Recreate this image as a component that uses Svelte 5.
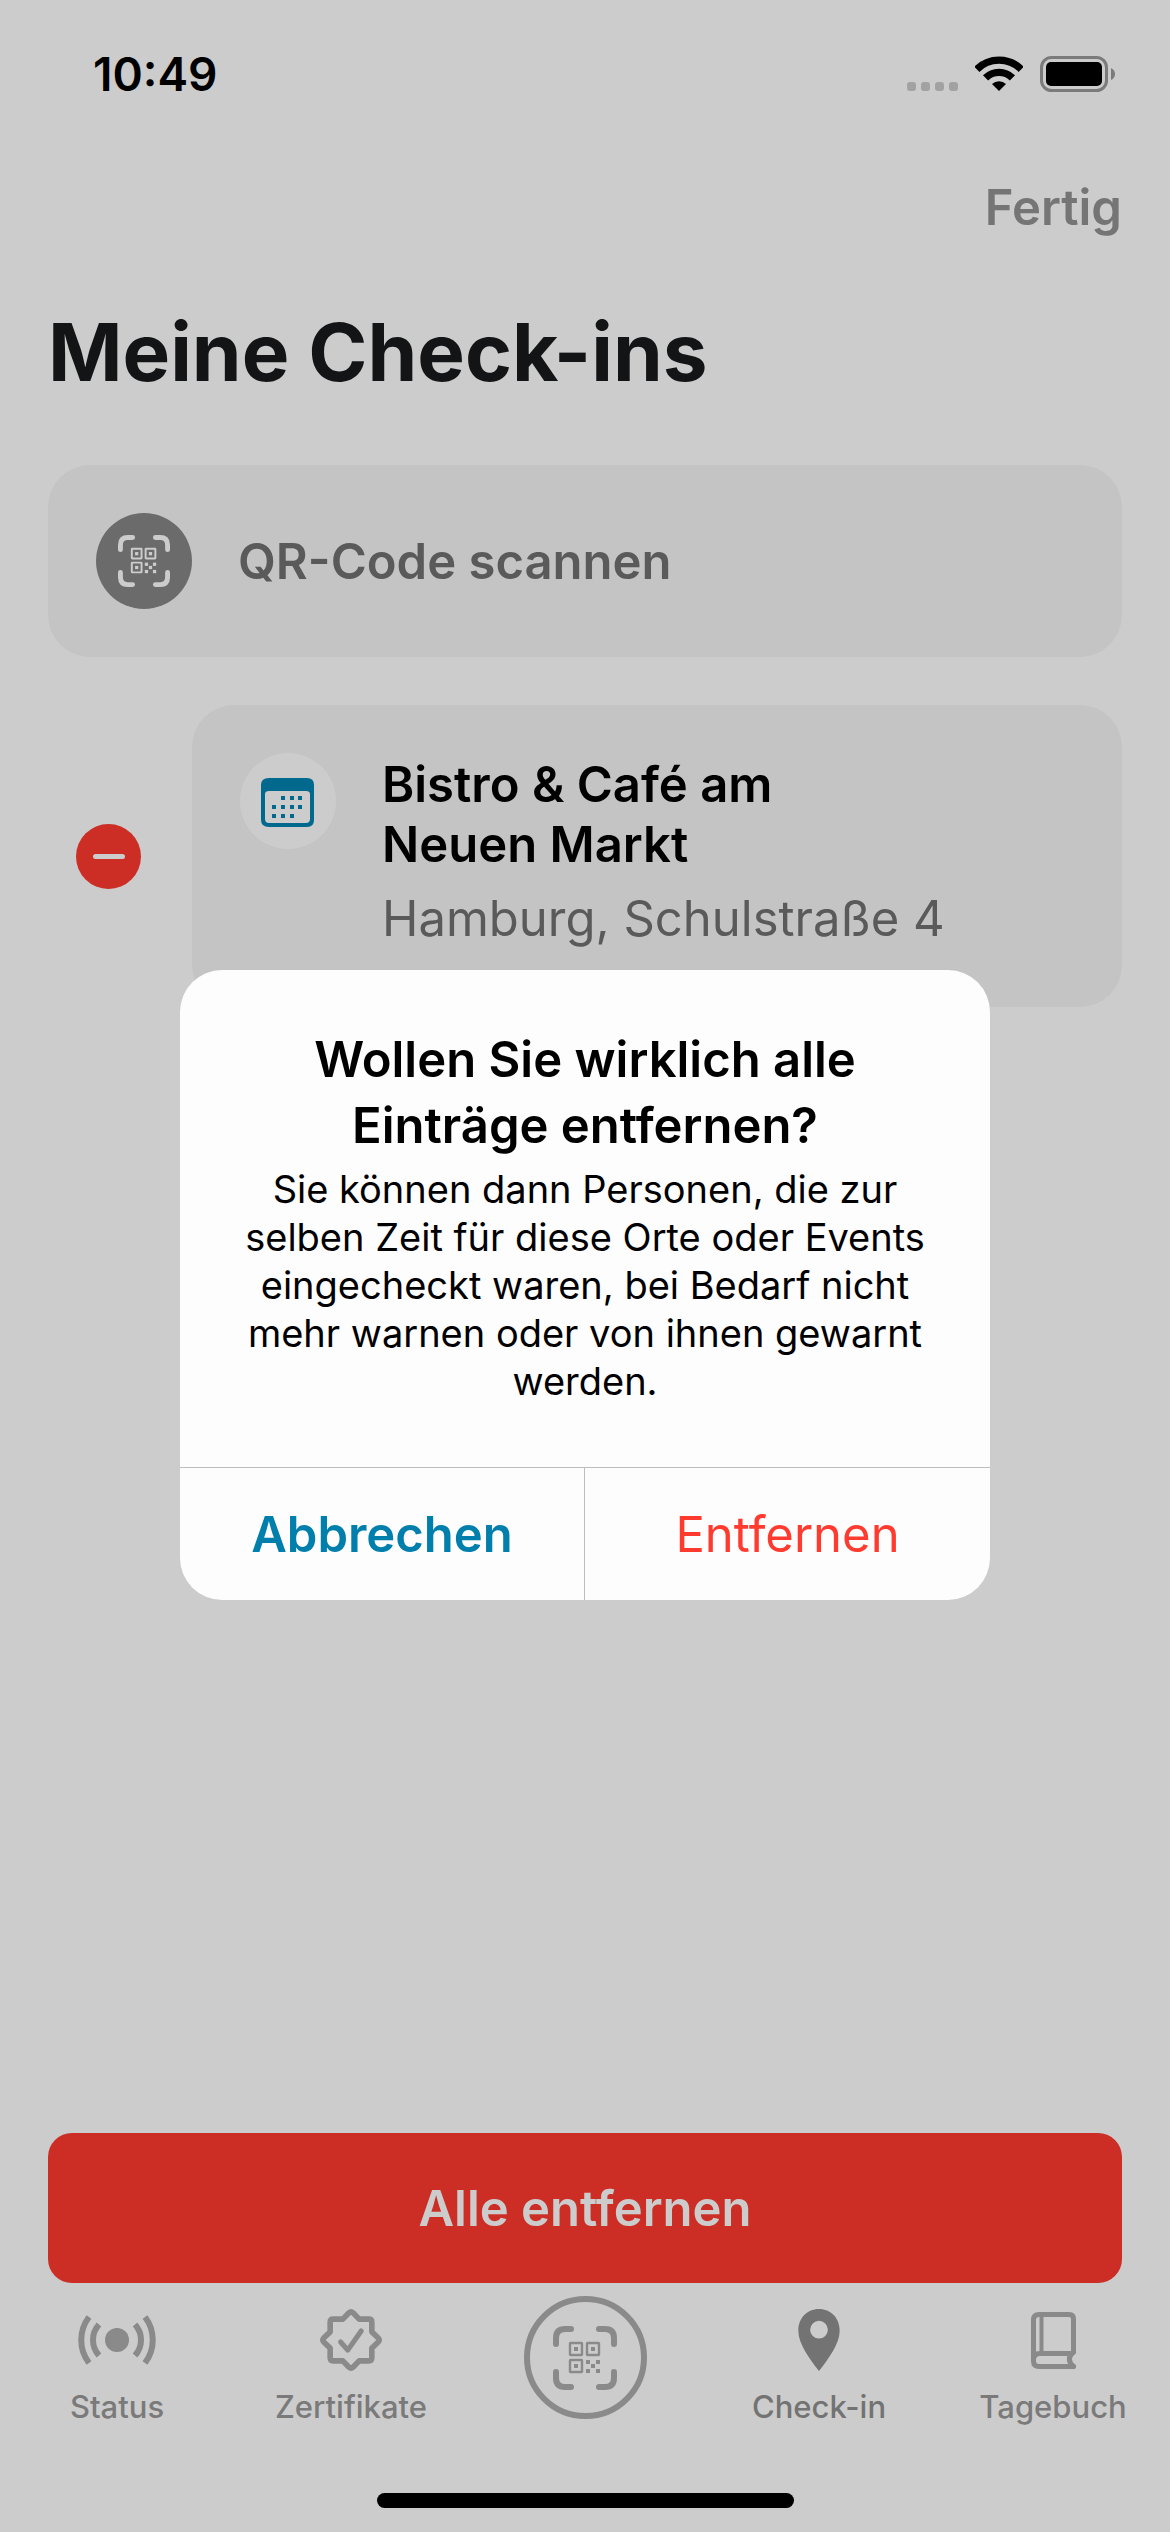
<script>
  const dayDots = [
    [20, 22], [29, 22], [37, 22],
    [11, 31], [20, 31], [29, 31], [37, 31],
    [11, 40], [20, 40], [29, 40]
  ];
  const qrFrames = [[17, 17], [34, 17], [17, 34]];
  const qrBits = [[33, 34], [43, 34], [38, 38], [33, 43], [43, 43]];
</script>

{#snippet qrIcon()}
  <svg class="qr" viewBox="0 0 64 64" aria-hidden="true">
    <g fill="none" stroke="currentColor" stroke-width="6" stroke-linecap="round">
      <path d="M18 3H12Q3 3 3 12V18" />
      <path d="M46 3H52Q61 3 61 12V18" />
      <path d="M18 61H12Q3 61 3 52V46" />
      <path d="M46 61H52Q61 61 61 52V46" />
    </g>
    {#each qrFrames as [x, y]}
      <rect {x} {y} width="12" height="12" rx="0.6" fill="none" stroke="currentColor" stroke-width="2.4" />
      <rect x={x + 4} y={y + 4} width="4" height="4" fill="currentColor" />
    {/each}
    {#each qrBits as [x, y]}
      <rect {x} {y} width="4" height="4" fill="currentColor" />
    {/each}
  </svg>
{/snippet}

<div class="screen">
  <header class="statusbar">
    <time>10:49</time>
    <div class="indicators">
      <svg width="51" height="36" viewBox="0 0 51 36" fill="#a2a2a2" aria-hidden="true">
        <rect x="0" y="26" width="9" height="9" rx="3" />
        <rect x="14" y="26" width="9" height="9" rx="3" />
        <rect x="28" y="26" width="9" height="9" rx="3" />
        <rect x="42" y="26" width="9" height="9" rx="3" />
      </svg>
      <svg width="48" height="36" viewBox="0 3 144 108" aria-hidden="true">
        <g fill="none" stroke="#000" stroke-width="22">
          <path d="M5.500 43A94 94 0 0 1 138.500 43" />
          <path d="M31.700 68.700A57 57 0 0 1 112.300 68.700" />
        </g>
        <path d="M51 87A30 30 0 0 1 93 87L72 108Z" />
      </svg>
      <svg width="75" height="36" viewBox="0 0 75 36" aria-hidden="true">
        <rect x="1.500" y="1.500" width="65" height="33" rx="10" fill="none" stroke="#7b7b7b" stroke-width="3" />
        <rect x="6" y="6" width="56" height="24" rx="5" />
        <path d="M71 12Q75 14 75 18T71 24Z" fill="#7b7b7b" />
      </svg>
    </div>
  </header>

  <div class="toolbar">
    <button class="done">Fertig</button>
  </div>

  <main>
    <h1>Meine Check-ins</h1>

    <button class="card scan">
      <span class="badge dark">{@render qrIcon()}</span>
      <span class="label">QR-Code scannen</span>
    </button>

    <div class="entry">
      <button class="remove" aria-label="Eintrag entfernen"><span></span></button>
      <article class="card place">
        <span class="badge light">
          <svg width="54" height="54" viewBox="0 0 54 54" aria-hidden="true">
            <path
              fill="#00698d"
              fill-rule="evenodd"
              d="M8 4H46Q53 4 53 11V46Q53 53 46 53H8Q0 53 0 46V11Q0 4 8 4ZM8 17Q4 17 4 20V45Q4 49 8 49H45Q49 49 49 45V20Q49 17 45 17Z"
            />
            {#each dayDots as [x, y]}
              <rect {x} {y} width="4" height="4" fill="#00698d" />
            {/each}
          </svg>
        </span>
        <div>
          <h2>Bistro & Café am<br />Neuen Markt</h2>
          <p>Hamburg, Schulstraße 4</p>
        </div>
      </article>
    </div>
  </main>

  <footer>
    <button class="remove-all">Alle entfernen</button>
    <nav>
      <a href="#status">
        <svg width="78" height="62" viewBox="0 -6 78 62" fill="none" stroke="currentColor" stroke-width="6" aria-hidden="true">
          <path d="M11 2A38 38 0 0 0 11 48M67 2A38 38 0 0 1 67 48" />
          <path d="M21 9.500A23 23 0 0 0 21 40.500M57 9.500A23 23 0 0 1 57 40.500" />
          <circle cx="39" cy="25" r="12" fill="currentColor" stroke="none" />
        </svg>
        <span>Status</span>
      </a>
      <a href="#zertifikate">
        <svg width="62" height="62" viewBox="0 0 61 61" fill="none" stroke="currentColor" stroke-width="5.500" stroke-linejoin="round" stroke-linecap="round" aria-hidden="true">
          <path d="M28.500 3.700Q30.500 2 32.500 3.700L38.500 10H48Q51 10 51 13V22.500L57.300 28.500Q59 30.500 57.300 32.500L51 38.500V48Q51 51 48 51H38.500L32.500 57.300Q30.500 59 28.500 57.300L22.500 51H13Q10 51 10 48V38.500L3.700 32.500Q2 30.500 3.700 28.500L10 22.500V13Q10 10 13 10H22.500Z" />
          <path stroke-width="5" d="M20.300 32.500L27.300 40.500L40.500 21.700" />
        </svg>
        <span>Zertifikate</span>
      </a>
      <a class="scanner" href="#scanner" aria-label="QR-Code scannen">{@render qrIcon()}</a>
      <a class="active" href="#check-in" aria-current="page">
        <svg width="42" height="62" viewBox="0 0 42 63" aria-hidden="true">
          <path
            fill="currentColor"
            fill-rule="evenodd"
            d="M21 0C33 0 42 9 42 22C42 35 31 50 21 63C11 50 0 35 0 22C0 9 9 0 21 0ZM21 12A9 9 0 1 0 21 30A9 9 0 1 0 21 12Z"
          />
        </svg>
        <span>Check-in</span>
      </a>
      <a href="#tagebuch">
        <svg width="45" height="62" viewBox="0 -3 45 62" fill="none" stroke="currentColor" stroke-width="5" stroke-linecap="round" aria-hidden="true">
          <path d="M42.500 40V7Q42.500 2.500 38 2.500H8Q2.500 2.500 2.500 8V49Q2.500 54.500 8 54.500H42.500" />
          <path d="M42.500 40C37 44 37 50 42.500 54.500" />
          <path d="M2.500 48Q2.500 41.500 9 41.500H41" />
          <path stroke-width="4" stroke-linecap="butt" d="M10.500 3V41" />
        </svg>
        <span>Tagebuch</span>
      </a>
    </nav>
    <div class="home"></div>
  </footer>

  <div class="overlay">
    <div class="alert" role="alertdialog" aria-modal="true" aria-labelledby="alert-title" aria-describedby="alert-text" tabindex="-1">
      <div class="message">
        <h2 id="alert-title">Wollen Sie wirklich alle Einträge entfernen?</h2>
        <p id="alert-text">
          Sie können dann Personen, die zur selben Zeit für diese Orte oder Events eingecheckt waren, bei Bedarf nicht mehr warnen oder von ihnen gewarnt werden.
        </p>
      </div>
      <div class="actions">
        <button class="cancel">Abbrechen</button>
        <button class="confirm">Entfernen</button>
      </div>
    </div>
  </div>
</div>

<style>
  :global(body) {
    margin: 0;
    background: #ccc;
  }

  .screen {
    position: relative;
    box-sizing: border-box;
    display: flex;
    flex-direction: column;
    min-height: 100vh;
    background: #ccc;
    color: #000;
    font-family: Inter, "Liberation Sans", sans-serif;
    font-size: 49px;
    line-height: 60px;
  }

  h1, h2, p {
    margin: 0;
  }

  button {
    padding: 0;
    border: 0;
    background: none;
    color: inherit;
    font: inherit;
    cursor: pointer;
  }

  svg {
    display: block;
    flex: none;
  }

  .statusbar {
    display: flex;
    justify-content: space-between;
    align-items: center;
    height: 148px;
    padding: 0 55px 0 93px;
  }

  .statusbar time {
    font-size: 46px;
    font-weight: 600;
  }

  .indicators {
    display: flex;
    gap: 17px;
  }

  .toolbar {
    display: flex;
    justify-content: flex-end;
    padding: 30px 48px;
  }

  .done {
    color: #757575;
    font-weight: 600;
  }

  main {
    flex: 1;
    padding: 36px 48px 48px;
  }

  h1 {
    color: #131415;
    font-size: 80px;
    font-weight: 700;
    line-height: 96px;
  }

  .card {
    box-sizing: border-box;
    padding: 48px;
    border-radius: 42px;
    background: #c4c4c4;
  }

  .scan {
    display: flex;
    align-items: center;
    gap: 46px;
    width: 100%;
    margin-top: 65px;
    color: #5a5a5a;
    font-weight: 600;
    text-align: left;
  }

  .label {
    padding-top: 2px;
  }

  .badge {
    display: flex;
    flex: none;
    align-items: center;
    justify-content: center;
    width: 96px;
    height: 96px;
    border-radius: 50%;
  }

  .dark {
    background: #6b6b6b;
    color: #ccc;
  }

  .light {
    background: #ccc;
  }

  .qr {
    width: 52px;
    height: 52px;
  }

  .entry {
    display: flex;
    align-items: center;
    gap: 51px;
    margin-top: 48px;
    padding-left: 28px;
  }

  .remove {
    display: flex;
    flex: none;
    align-items: center;
    justify-content: center;
    width: 65px;
    height: 65px;
    border-radius: 50%;
    background: #cc2e26;
  }

  .remove span {
    width: 32px;
    height: 5px;
    border-radius: 3px;
    background: #ccc;
  }

  .place {
    display: flex;
    flex: 1;
    gap: 46px;
  }

  .place h2 {
    padding-top: 2px;
    font-size: 49px;
    font-weight: 600;
    line-height: 60px;
  }

  .place p {
    padding: 14px 0 10px;
    color: #5a5a5a;
  }

  .remove-all {
    display: block;
    width: calc(100% - 96px);
    height: 150px;
    margin: 0 48px;
    padding-top: 2px;
    border-radius: 24px;
    background: #cc2e26;
    color: #ccc;
    font-weight: 600;
  }

  nav {
    display: grid;
    grid-template-columns: repeat(5, 1fr);
    height: 210px;
  }

  nav a {
    display: flex;
    flex-direction: column;
    align-items: center;
    gap: 18px;
    padding-top: 26px;
    color: #8a8a8a;
    text-decoration: none;
  }

  nav a span {
    color: #7a7a7a;
    font-size: 31px;
    font-weight: 500;
    line-height: 36px;
  }

  nav .active,
  nav .active span {
    color: #737373;
  }

  nav .scanner {
    box-sizing: border-box;
    justify-content: center;
    justify-self: center;
    width: 123px;
    height: 123px;
    margin-top: 13px;
    padding: 0;
    border: 6px solid #8a8a8a;
    border-radius: 50%;
  }

  .scanner .qr {
    width: 64px;
    height: 64px;
  }

  .home {
    width: 417px;
    height: 15px;
    margin: 0 auto 24px;
    border-radius: 8px;
    background: #000;
  }

  .overlay {
    position: absolute;
    inset: 0;
    display: flex;
    align-items: center;
    justify-content: center;
    padding: 141px 0 103px;
  }

  .alert {
    width: 810px;
    overflow: hidden;
    border-radius: 42px;
    background: #fdfdfd;
    text-align: center;
  }

  .message {
    padding: 57px 48px 62px;
  }

  .message h2 {
    padding: 0 60px;
    font-size: 49px;
    font-weight: 600;
    line-height: 66px;
  }

  .message p {
    padding-top: 6px;
    font-size: 38px;
    line-height: 48px;
  }

  .actions {
    display: grid;
    grid-template-columns: 1fr 1fr;
    height: 132px;
    border-top: 1px solid #bebebe;
  }

  .actions button {
    padding-top: 2px;
  }

  .cancel {
    border-right: 1px solid #bebebe;
    color: #007fad;
    font-weight: 600;
  }

  .confirm {
    color: #ff3b30;
  }
</style>
